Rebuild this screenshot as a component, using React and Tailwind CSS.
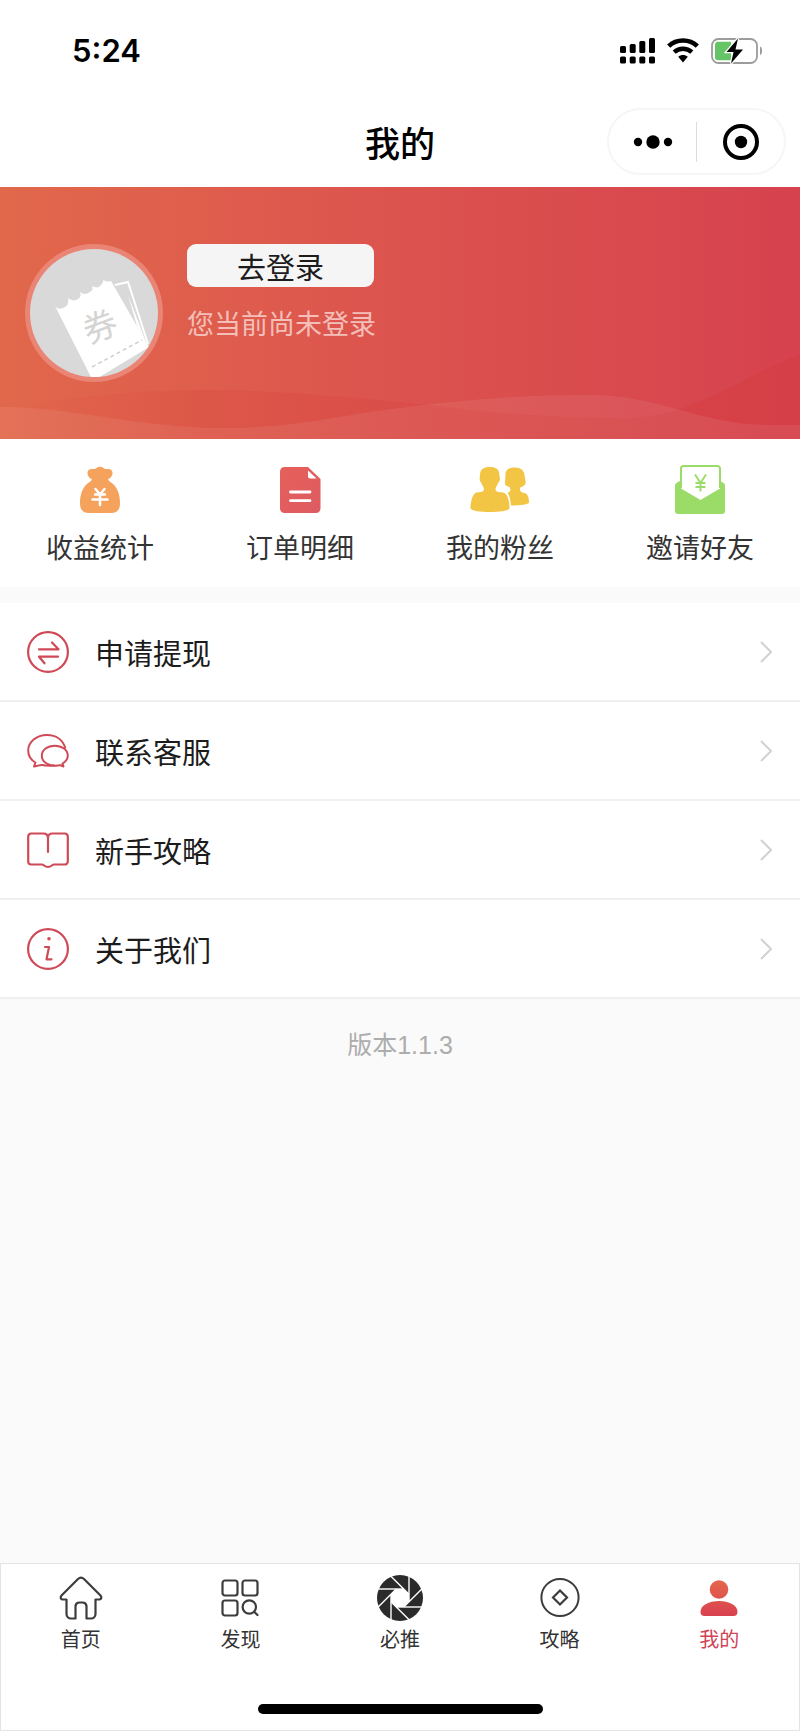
import React from "react";

const shortcuts = [
  { label: "收益统计", icon: MoneyBagIcon },
  { label: "订单明细", icon: OrderIcon },
  { label: "我的粉丝", icon: FansIcon },
  { label: "邀请好友", icon: InviteIcon },
];

const menuItems = [
  { label: "申请提现", icon: WithdrawIcon },
  { label: "联系客服", icon: ServiceIcon },
  { label: "新手攻略", icon: GuideIcon },
  { label: "关于我们", icon: AboutIcon },
];

const tabs = [
  { label: "首页", icon: HomeIcon },
  { label: "发现", icon: DiscoverIcon },
  { label: "必推", icon: ApertureIcon },
  { label: "攻略", icon: CoinIcon },
  { label: "我的", icon: UserIcon, active: true },
];

function MoneyBagIcon() {
  return (
    <svg width="60" height="50" viewBox="0 0 60 50" aria-hidden="true">
      <path
        d="M22 14C17 13 15 4 22 4C24 4 25 4 26 3.5C28 1 32 1 34 3.5C35 4 36 4 38 4C45 4 43 13 38 14L39 16C46 20 50 27 50 38C50 45 47 48 41 48H19C13 48 10 45 10 38C10 27 14 20 21 16Z"
        fill="#f5a35c"
      />
      <path d="M25.500 24L30 29.500L34.500 24M25 29.500H35M22.500 34.500H37.500M30 29.500V40" fill="none" stroke="#fff" strokeWidth="2.500" strokeLinecap="round" />
    </svg>
  );
}

function OrderIcon() {
  return (
    <svg width="60" height="50" viewBox="0 0 60 50" aria-hidden="true">
      <defs>
        <linearGradient id="order" x1="0" y1="0" x2="1" y2="1">
          <stop offset="0" stopColor="#e6605a" />
          <stop offset="1" stopColor="#dd5b62" />
        </linearGradient>
      </defs>
      <path d="M14.500 2H38L50.500 14V43.500A4.500 4.500 0 0 1 46 48H14.500A4.500 4.500 0 0 1 10 43.500V6.500A4.500 4.500 0 0 1 14.500 2Z" fill="url(#order)" />
      <path d="M38 5.500V11.500A2 2 0 0 0 40 13.500H46.500Z" fill="#fff" />
      <path d="M20.500 27H40M20.500 35.700H40" stroke="#fff" strokeWidth="2.800" strokeLinecap="round" />
    </svg>
  );
}

function FansIcon() {
  return (
    <svg width="60" height="50" viewBox="0 0 60 50" aria-hidden="true">
      <path
        d="M35.500 9C35.500 4.500 39 2.500 45 2.500C51 2.500 54 5.500 54.500 10C55 14 56.500 18 55 19.500C53.500 21.500 50.500 22 50 23C49.500 26 51 27.500 54 28C58 28.500 59 33 59 37.500C58.500 39.500 51 40.500 41 40.500C40.500 35 39.500 30 37.500 27.500C41 27 41 25 39.500 22C37 21 35 20.500 35 18.500Z"
        fill="#f3c544"
      />
      <path
        d="M10 11C10 4.500 13 2 19.700 2C26.500 2 29.500 4.500 29.500 11C30.500 14 29.500 17 28 18C27 21 26 22 25.500 23.500C25.500 27 28 27 33 27.500C37.500 28 39.500 36 39.500 43C39.500 46 28 47 20 47C11 47 .5 46 .5 43C.5 36 3 28 6.500 27.500C11 27 14 27 14 23.500C13.500 22 12.500 21 11.500 18C10 17 9 14 10 11Z"
        fill="#f3c544"
      />
    </svg>
  );
}

function InviteIcon() {
  return (
    <svg width="60" height="50" viewBox="0 0 60 50" aria-hidden="true">
      <path d="M5 20.500C5 18.500 7 17.500 10 16H50C53 17.500 55 18.500 55 20.500V46A3 3 0 0 1 52 49H8A3 3 0 0 1 5 46Z" fill="#9bdc68" />
      <path d="M11 23.500V3.500A2.500 2.500 0 0 1 13.500 1H47.500A2.500 2.500 0 0 1 50 3.500V23.500L30.500 35Z" fill="#fff" />
      <path d="M11 23V3.500A2.500 2.500 0 0 1 13.500 1H47.500A2.500 2.500 0 0 1 50 3.500V23" fill="none" stroke="#9bdc68" strokeWidth="2" />
      <path d="M25 9.500L30.500 18L36 9.500M25.500 18H35.500M25.500 22H35.500M30.500 18V26.500" fill="none" stroke="#9bdc68" strokeWidth="1.900" />
    </svg>
  );
}

function WithdrawIcon() {
  return (
    <svg width="42" height="42" viewBox="0 0 42 42" fill="none" stroke="#cf4a56" strokeWidth="2.200" strokeLinecap="round" strokeLinejoin="round" aria-hidden="true">
      <circle cx="21" cy="21" r="19.900" />
      <path d="M12 18.300H31.500L25 11.500M31 25.700H12L17.500 32.300" />
    </svg>
  );
}

function ServiceIcon() {
  return (
    <svg width="42" height="42" viewBox="0 0 42 42" fill="none" stroke="#cf4a56" strokeWidth="2" strokeLinejoin="round" aria-hidden="true">
      <path d="M38.500 18.500C36 10 29 5 20 5C9.500 5 1.200 12 1.200 20.500C1.200 25.500 4 30 8.500 32.500L7 36.500C10 36.500 13 34.500 15.500 35C19 36 23 35.700 27.700 35.500" />
      <path d="M36.500 36.500L35.500 33.500C39 31.500 40.800 28.700 40.800 25.500C40.800 20 35 15.700 27.700 15.700C20.500 15.700 14.800 20 14.800 25.700C14.800 31.300 20.500 35.700 27.700 35.700C30 35.700 32.500 35 33.500 35.300Z" />
    </svg>
  );
}

function GuideIcon() {
  return (
    <svg width="42" height="42" viewBox="0 0 42 42" fill="none" stroke="#cf4a56" strokeWidth="2.200" strokeLinecap="round" strokeLinejoin="round" aria-hidden="true">
      <path d="M21 23V9C21 6 19 4.500 16.500 4.500H4.200A3 3 0 0 0 1.200 7.500V32.500A3 3 0 0 0 4.200 35.500H15C17 35.500 17.500 38 21 38C24.500 38 25 35.500 27 35.500H37.800A3 3 0 0 0 40.800 32.500V7.500A3 3 0 0 0 37.800 4.500H25.500C23 4.500 21 6 21 9" />
    </svg>
  );
}

function AboutIcon() {
  return (
    <svg width="42" height="42" viewBox="0 0 42 42" fill="none" stroke="#cf4a56" strokeWidth="2.200" aria-hidden="true">
      <circle cx="21" cy="21" r="19.900" />
      <circle cx="22" cy="10.700" r="1.800" fill="#cf4a56" stroke="none" />
      <path d="M18 19H22L19.500 31.300H24.500" strokeLinecap="round" strokeLinejoin="round" />
    </svg>
  );
}

function HomeIcon() {
  return (
    <svg width="48" height="48" viewBox="0 0 48 48" fill="none" stroke="#3c3c3c" strokeWidth="2.200" strokeLinejoin="round" aria-hidden="true">
      <path d="M21 5L4.500 21.500C2.800 23.500 3.800 25.500 6 25.500H9.500V40A4.500 4.500 0 0 0 14 44.500H18.500V32A4 4 0 0 1 22.500 28.500H25.500A4 4 0 0 1 29.500 32V44.500H34A4.500 4.500 0 0 0 38.500 40V25.500H42C44.200 25.500 45.200 23.500 43.500 21.500L27 5C25 3.200 23 3.200 21 5Z" />
    </svg>
  );
}

function DiscoverIcon() {
  return (
    <svg width="48" height="48" viewBox="0 0 48 48" fill="none" stroke="#3c3c3c" strokeWidth="2.200" strokeLinecap="round" aria-hidden="true">
      <rect x="6.500" y="6.500" width="15" height="15" rx="2.500" />
      <rect x="26.500" y="6.500" width="15" height="15" rx="2.500" />
      <rect x="6.500" y="26.500" width="15" height="15" rx="2.500" />
      <circle cx="33.300" cy="33" r="6.700" />
      <path d="M38.200 37.800L41.500 41" />
    </svg>
  );
}

function ApertureIcon() {
  return (
    <svg width="48" height="48" viewBox="-24 -24 48 48" aria-hidden="true">
      <circle r="23" fill="#2b2b2b" />
      <path d="M-3.700 -9H3.700L9 -3.700V3.700L3.700 9H-3.700L-9 3.700V-3.700Z" fill="#fff" />
      {[0, 45, 90, 135, 180, 225, 270, 315].map((angle) => (
        <path key={angle} d="M3.700 -9H-24" stroke="#fff" strokeWidth="1.400" transform={`rotate(${angle})`} />
      ))}
    </svg>
  );
}

function CoinIcon() {
  return (
    <svg width="48" height="48" viewBox="0 0 48 48" fill="none" stroke="#3c3c3c" aria-hidden="true">
      <circle cx="24" cy="23.500" r="18.600" strokeWidth="2" />
      <path d="M24 16.500L31 23.500L24 30.500L17 23.500Z" strokeWidth="2.200" />
    </svg>
  );
}

function UserIcon() {
  return (
    <svg width="48" height="48" viewBox="0 0 48 48" aria-hidden="true">
      <defs>
        <linearGradient id="user" x1="0" y1="6" x2="0" y2="42" gradientUnits="userSpaceOnUse">
          <stop offset="0" stopColor="#e5674c" />
          <stop offset="1" stopColor="#d8414f" />
        </linearGradient>
      </defs>
      <circle cx="24" cy="15.500" r="9.300" fill="url(#user)" />
      <path d="M24 27C34 27 42.500 31 42.500 38C42.500 40.500 41 42 38.500 42H9.500C7 42 5.500 40.500 5.500 38C5.500 31 14 27 24 27Z" fill="url(#user)" />
    </svg>
  );
}

function StatusIcons() {
  return (
    <div className="flex items-center gap-3">
      <svg width="35" height="26" viewBox="0 0 35 26" aria-hidden="true">
        <rect y="8" width="6" height="7" rx="1.500" />
        <rect x="9.700" y="6" width="6" height="9" rx="1.500" />
        <rect x="19.300" y="3" width="6" height="12" rx="1.500" />
        <rect x="29" width="6" height="15" rx="1.500" />
        <rect y="18.500" width="6" height="7" rx="1.500" />
        <rect x="9.700" y="18.500" width="6" height="7" rx="1.500" />
        <rect x="19.300" y="18.500" width="6" height="7" rx="1.500" />
        <rect x="29" y="18.500" width="6" height="7" rx="1.500" />
      </svg>
      <svg width="32" height="26" viewBox="0 0 32 26" aria-hidden="true">
        <path d="M1.700 8.200C9.500 .6 22.500 .6 30.300 8.200" fill="none" stroke="#000" strokeWidth="4.600" />
        <path d="M7.200 14.200C12.200 9.600 19.800 9.600 24.800 14.200" fill="none" stroke="#000" strokeWidth="4.400" />
        <path d="M11.200 18.700C14 16.400 18 16.400 20.800 18.700L16 24.500Z" />
      </svg>
      <svg width="52" height="26" viewBox="0 0 52 26" aria-hidden="true">
        <rect x="1" y="1" width="45" height="24" rx="6.500" fill="#fff" stroke="#9c9c9c" strokeWidth="1.800" />
        <path d="M49 8.500C51.800 9.500 51.800 16 49 17Z" fill="#9c9c9c" />
        <path d="M7 3.700H20V22.300H7A3 3 0 0 1 4 19.300V6.700A3 3 0 0 1 7 3.700Z" fill="#65c466" />
        <path d="M27 .5L15.500 14H22.500L20 25.500L32 11.500H24.500Z" stroke="#fff" strokeWidth="2.500" paintOrder="stroke" />
      </svg>
    </div>
  );
}

function Avatar() {
  return (
    <svg className="shrink-0" width="138" height="138" viewBox="0 0 138 138" role="img" aria-label="头像">
      <defs>
        <clipPath id="avatar">
          <circle cx="69" cy="69" r="64" />
        </clipPath>
      </defs>
      <circle cx="69" cy="69" r="69" fill="#ea8576" />
      <circle cx="69" cy="69" r="64" fill="#d9d9d9" />
      <g clipPath="url(#avatar)">
        <path d="M90 41L103 38L123 100" fill="none" stroke="#fff" strokeWidth="2" />
        <path d="M103 51L121 98L112 82Z" fill="#fff" />
        <path
          d="M30 62C33 66 37 65 40 63C43 61 44 57 43 54C47 57 50 57 53 55C56 53 56 51 55 48C59 51 62 50 65 48C68 46 68 44 67 42C71 44 74 44 76 41C78 39 79 37 78 35C80 38 84 38 86 37L124 103L68 137Z"
          fill="#fff"
        />
        <path d="M67 123L117 96" stroke="#cfcfcf" strokeWidth="1.500" strokeDasharray="4 3" />
        <text x="75" y="95" fontSize="34" fill="#d4d4d4" textAnchor="middle" transform="rotate(-20 75 83)">
          券
        </text>
      </g>
    </svg>
  );
}

function HeroWaves() {
  return (
    <svg className="absolute inset-0 h-full w-full" viewBox="0 0 800 252" preserveAspectRatio="none" aria-hidden="true">
      <defs>
        <linearGradient id="shade" x1="0" y1="0" x2="1" y2="0">
          <stop offset="0" stopColor="#d8443c" stopOpacity="0" />
          <stop offset="0.250" stopColor="#d8443c" stopOpacity="0.250" />
          <stop offset="1" stopColor="#d43a3e" stopOpacity="0.450" />
        </linearGradient>
      </defs>
      <path
        d="M0 221C60 212 130 203 200 203C290 203 370 212 440 219C500 227 560 231 620 231C700 231 745 185 800 168V252H0Z"
        fill="url(#shade)"
      />
      <path
        d="M0 220C60 218 140 241 225 241C300 241 350 226 400 221C460 213 520 208 590 208C660 208 700 238 770 238H800V252H0Z"
        fill="#fff"
        fillOpacity="0.070"
      />
    </svg>
  );
}

export default function App() {
  return (
    <div className="flex min-h-screen flex-col bg-[#fafafa] font-['Noto_Sans_CJK_SC',sans-serif] text-[#1c1c1c]">
      <header className="bg-white">
        <div className="flex h-[102px] items-center justify-between pr-[37px] pl-[72px]">
          <span className="font-['Inter',sans-serif] text-[31px] font-semibold text-black">5:24</span>
          <StatusIcons />
        </div>
        <div className="grid h-[85px] grid-cols-3 items-start px-[14px] pt-[6px]">
          <h1 className="col-start-2 flex h-[67px] items-center justify-center text-[35px] leading-10 font-medium text-black">
            我的
          </h1>
          <div className="flex h-[67px] w-[179px] items-center justify-self-end rounded-full border-2 border-[#f6f6f6]">
            <button className="flex h-full flex-1 items-center justify-center" aria-label="更多">
              <svg width="40" height="14" viewBox="0 0 40 14" aria-hidden="true">
                <circle cx="5" cy="7" r="4.200" />
                <circle cx="20" cy="7" r="6.700" />
                <circle cx="35" cy="7" r="4.200" />
              </svg>
            </button>
            <span className="h-10 w-px bg-[#dcdcdc]" />
            <button className="flex h-full flex-1 items-center justify-center" aria-label="关闭">
              <svg width="36" height="36" viewBox="0 0 36 36" aria-hidden="true">
                <circle cx="18" cy="18" r="16" fill="none" stroke="#000" strokeWidth="4" />
                <circle cx="18" cy="18" r="6.200" />
              </svg>
            </button>
          </div>
        </div>
      </header>

      <main>
        <section className="relative h-[252px] bg-linear-to-r from-[#e1684b] via-[#dc534e] to-[#d6424e]">
          <HeroWaves />
          <div className="relative flex gap-6 px-[25px] pt-[57px]">
            <Avatar />
            <div>
              <button className="flex h-[43px] w-[187px] items-center justify-center rounded-[9px] bg-[#f5f5f5] text-[29px] leading-10">
                去登录
              </button>
              <p className="mt-4 text-[27px] leading-10 text-[#f3bfb8]">您当前尚未登录</p>
            </div>
          </div>
        </section>

        <section className="grid grid-cols-4 bg-white pt-[26px] pb-5">
          {shortcuts.map(({ label, icon: Icon }) => (
            <a key={label} href="#" className="flex flex-col items-center gap-3 text-[27px] leading-10 text-[#333]">
              <Icon />
              {label}
            </a>
          ))}
        </section>

        <ul className="mt-4 bg-white">
          {menuItems.map(({ label, icon: Icon }) => (
            <li key={label} className="border-b-2 border-[#efefef]">
              <a href="#" className="flex h-[97px] items-center pr-[28px] pl-[27px] text-[29px] leading-10">
                <Icon />
                <span className="ml-[26px] flex-1">{label}</span>
                <svg width="12" height="22" viewBox="0 0 12 22" fill="none" stroke="#d2d2d2" strokeWidth="2" aria-hidden="true">
                  <path d="M1 1L11 11L1 21" />
                </svg>
              </a>
            </li>
          ))}
        </ul>

        <p className="mt-[26px] text-center font-['Liberation_Sans','Noto_Sans_CJK_SC',sans-serif] text-[25px] leading-10 text-[#adadad]">
          版本1.1.3
        </p>
      </main>

      <nav className="mt-auto border border-[#e4e4e4] bg-white">
        <div className="grid grid-cols-5 pt-[10px]">
          {tabs.map(({ label, icon: Icon, active }) => (
            <a
              key={label}
              href="#"
              aria-current={active ? "page" : undefined}
              className={`flex flex-col items-center gap-[3px] text-[20px] leading-7 ${active ? "text-[#d04456]" : "text-[#333]"}`}
            >
              <Icon />
              {label}
            </a>
          ))}
        </div>
        <div className="mx-auto mt-[51px] mb-4 h-[10px] w-[285px] rounded-full bg-black" />
      </nav>
    </div>
  );
}
